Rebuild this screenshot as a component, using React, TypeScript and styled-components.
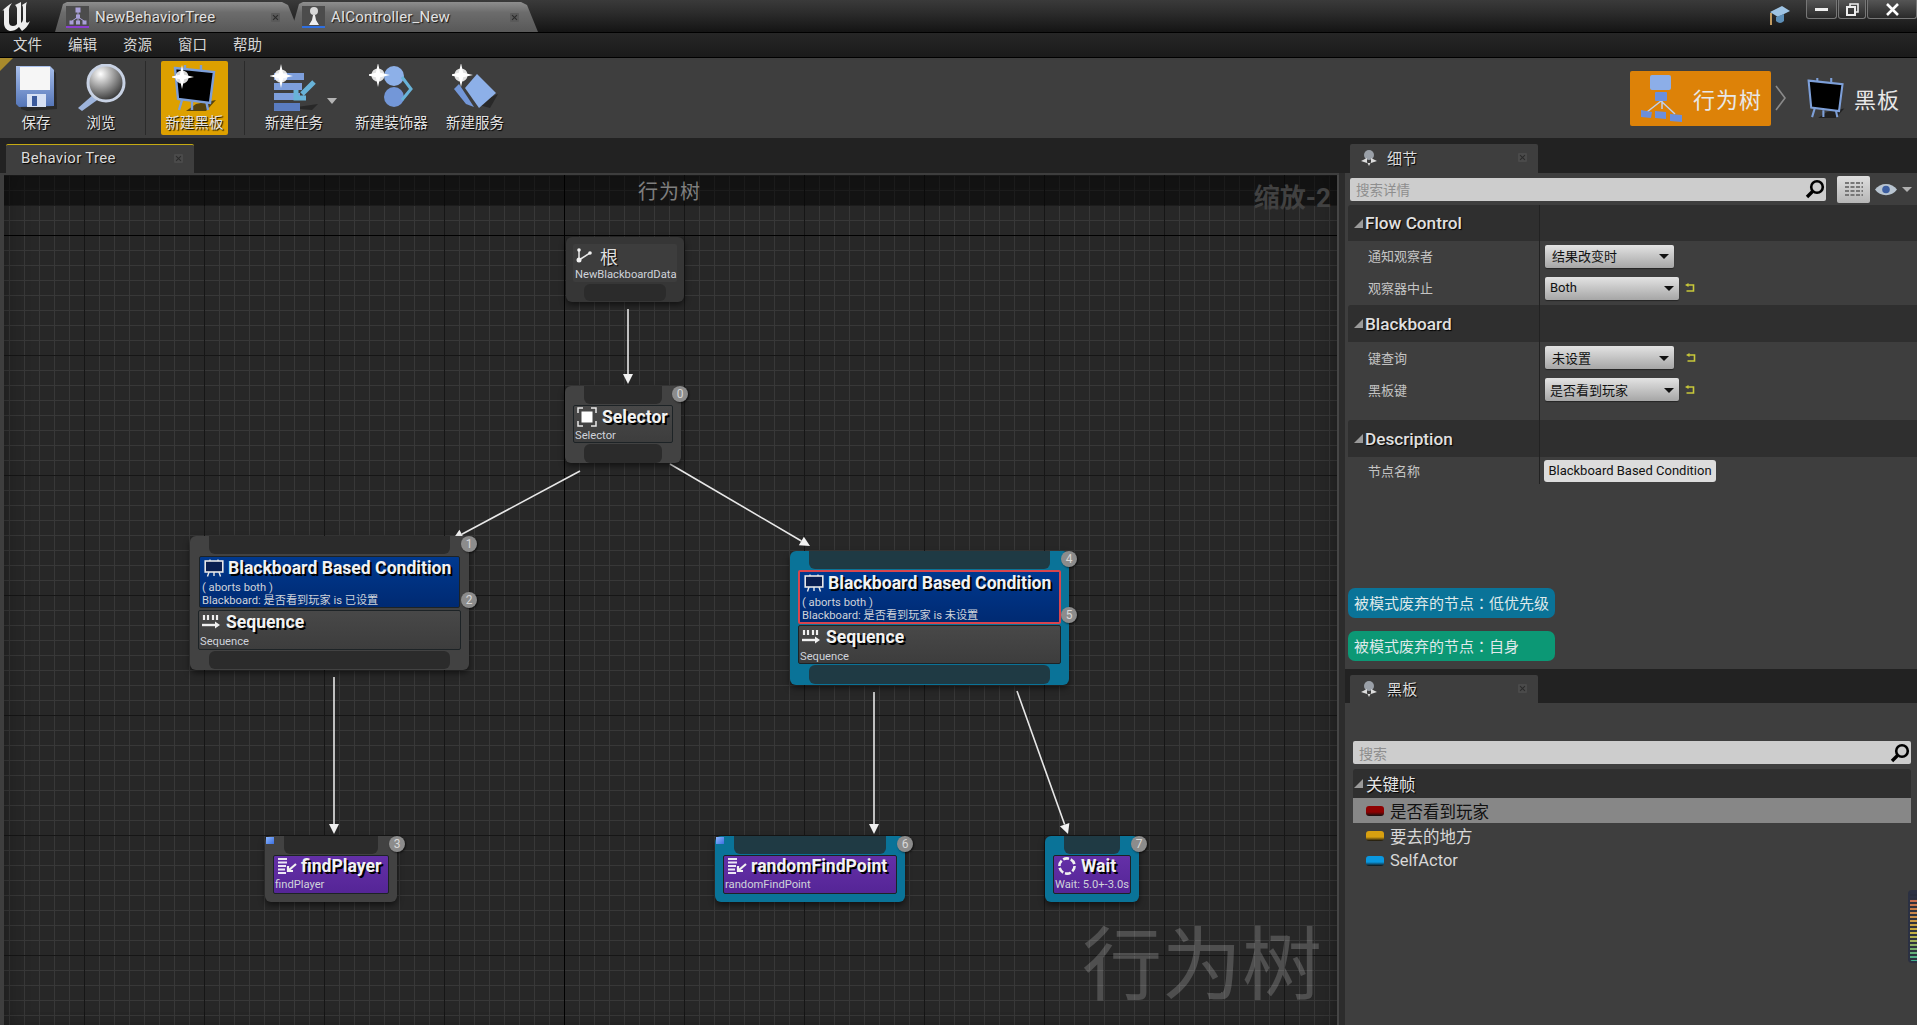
import React from "react";
import styled, { createGlobalStyle } from "styled-components";

const CJK = `"Roboto", "Noto Sans CJK SC", sans-serif`;

const Global = createGlobalStyle`
  html, body { margin: 0; padding: 0; background: #3e3e3e; overflow: hidden; }
  #root { width: 1917px; height: 1025px; }
  * { box-sizing: border-box; }
`;

const Screen = styled.div`
  width: 1917px; height: 1025px; display: flex; flex-direction: column;
  font-family: ${CJK}; color: #ddd; background: #3e3e3e; overflow: hidden; position: relative;
`;

/* ---------- title bar ---------- */
const TitleBar = styled.div`
  height: 33px; flex: none; display: flex; align-items: flex-end; position: relative;
  background: linear-gradient(#3a3a3a, #2c2c2c 40%, #141414);
  border-bottom: 1px solid #000;
`;
const LogoBox = styled.div`
  width: 55px; height: 32px; flex: none; padding: 2px 0 0 1px; display: flex;
`;
const DocTab = styled.div<{ $w: number; $shift?: number }>`
  width: ${p => p.$w}px; height: 30px; flex: none; margin-left: ${p => p.$shift ?? 0}px;
  display: flex; align-items: center; gap: 6px; padding: 0 0 0 11px;
  background: linear-gradient(#8e8e8e, #6c6c6c 35%, #585858);
  clip-path: polygon(0 100%, 8px 2px, 12px 0, calc(100% - 22px) 0, calc(100% - 16px) 3px, calc(100% - 5px) 100%);
  font-size: 15px; color: #e2e2e2; text-shadow: 1px 1px 1px #111; letter-spacing: .2px;
`;
const DocIcon = styled.div<{ $line: string }>`
  width: 23px; height: 22px; flex: none; background: #4c4c4c; border-bottom: 2px solid ${p => p.$line};
  display: flex; align-items: center; justify-content: center;
`;
const DocLabel = styled.span<{ $w: number }>` width: ${p => p.$w}px; flex: none; white-space: nowrap; padding-bottom: 1px; `;
const SmallClose = styled.span<{ $c?: string }>`
  width: 9px; height: 9px; flex: none; position: relative; background: ${p => p.$c ?? "#5a5a5a"}; border-radius: 1px;
  &::before, &::after { content: ""; position: absolute; left: 4px; top: 1px; width: 1px; height: 7px; background: #2b2b2b; }
  &::before { transform: rotate(45deg); } &::after { transform: rotate(-45deg); }
`;
const TitleRight = styled.div`
  margin-left: auto; align-self: flex-start; display: flex; align-items: flex-start;
`;
const CapBox = styled.div` margin: 5px 14px 0 0; width: 22px; height: 21px; `;
const WinBtn = styled.div<{ $w: number }>`
  width: ${p => p.$w}px; height: 19px; margin-left: 1px; display: flex; align-items: center; justify-content: center;
  background: linear-gradient(#555, #2a2a2a); border: 1px solid #777; border-top: none; border-radius: 0 0 3px 3px;
`;

/* ---------- menu ---------- */
const MenuBar = styled.div`
  height: 25px; flex: none; display: flex; align-items: center; padding: 0 0 4px 13px; gap: 26px;
  background: linear-gradient(#262626, #1a1a1a); border-bottom: 1px solid #000;
  font-size: 14.5px; color: #d8d8d8;
`;
const MenuItem = styled.span` width: 29px; white-space: nowrap; `;

/* ---------- toolbar ---------- */
const Toolbar = styled.div`
  height: 80px; flex: none; display: flex; align-items: center; position: relative; padding-left: 4px;
  background: #3e3e3e;
  &::before { content: ""; position: absolute; left: 0; top: 0; border-top: 13px solid #a88a2c; border-right: 13px solid transparent; }
`;
const ToolButton = styled.div<{ $w: number; $on?: boolean; $ml?: number }>`
  width: ${p => p.$w}px; height: 74px; flex: none; display: flex; flex-direction: column; align-items: center;
  padding-top: 3px; border-radius: 2px; background: ${p => (p.$on ? "#dda000" : "transparent")};
  position: relative; margin-left: ${p => p.$ml ?? 0}px;
`;
const ToolIcon = styled.div` height: 48px; flex: none; display: flex; align-items: center; justify-content: center; `;
const ToolLabel = styled.span`
  font-size: 14.5px; line-height: 20px; margin-top: 2px; color: #e4e4e4; white-space: nowrap; text-shadow: 1px 1px 1px #000;
`;
const ToolSep = styled.div<{ $l: number; $r: number }>`
  width: 1px; height: 74px; flex: none; background: #2a2a2a; margin: 0 ${p => p.$r}px 0 ${p => p.$l}px;
`;
const Caret = styled.span`
  position: absolute; right: -12px; top: 37px; border: 5px solid transparent; border-top: 6px solid #b4b4b4; border-bottom: none;
`;
const ModeBar = styled.div` margin-left: auto; display: flex; align-items: center; padding-right: 17px; `;
const ModeButton = styled.div<{ $on?: boolean; $w: number; $pad: number; $gap: number }>`
  width: ${p => p.$w}px; height: 55px; display: flex; align-items: center; gap: ${p => p.$gap}px; padding-left: ${p => p.$pad}px; border-radius: 2px;
  background: ${p => (p.$on ? "#dd8208" : "transparent")}; font-size: 22px; color: #e8e8e8; white-space: nowrap;
  letter-spacing: 1px;
`;
const ModeChevron = styled.svg` margin: 0 19px 0 4px; flex: none; `;

/* ---------- workspace ---------- */
const Workspace = styled.div` flex: 1; min-height: 0; display: flex; `;
const LeftCol = styled.div` width: 1345px; flex: none; display: flex; flex-direction: column; background: #3e3e3e; `;
const RightCol = styled.div` flex: 1; min-width: 0; display: flex; flex-direction: column; background: #3e3e3e; position: relative; `;
const TabRow = styled.div<{ $h: number; $left: number; $mt?: number }>`
  height: ${p => p.$h}px; flex: none; background: #222; display: flex; align-items: flex-end; padding-left: ${p => p.$left}px;
  margin-top: ${p => p.$mt ?? 0}px;
`;
const PanelTab = styled.div<{ $w: number; $h?: number; $accent?: boolean }>`
  width: ${p => p.$w}px; height: ${p => p.$h ?? 29}px; background: #3e3e3e; display: flex; align-items: center; padding: 0 11px 2px 10px;
  font-size: 15px; color: #dcdcdc; text-shadow: 1px 1px 1px #000; position: relative;
  border-top: ${p => (p.$accent ? "1px solid #c5aa12" : "none")}; border-radius: 2px 2px 0 0;
`;
const TabIconBox = styled.span` width: 22px; flex: none; display: flex; `;
const TabText = styled.span<{ $indent?: number }>` flex: 1; padding-left: ${p => p.$indent ?? 0}px; letter-spacing: .3px; `;

const CanvasRow = styled.div` flex: 1; min-height: 0; display: flex; padding-top: 2px; `;
const Gutter = styled.div` width: 6px; flex: none; background: #2c2c2c; margin-top: -2px; `;
const Canvas = styled.div`
  flex: 1; margin-left: 4px; position: relative; overflow: hidden; background-color: #272727;
  border-right: 2px solid #464646;
  box-shadow: inset -14px 0 24px -14px rgba(0,0,0,.35), inset 14px 0 24px -14px rgba(0,0,0,.35);
  background-repeat: no-repeat, no-repeat, repeat, repeat, repeat, repeat;
  background-image:
    linear-gradient(#000, #000),
    linear-gradient(#000, #000),
    linear-gradient(to right, #161616 1px, transparent 1px),
    linear-gradient(to bottom, #161616 1px, transparent 1px),
    linear-gradient(to right, #383838 1px, transparent 1px),
    linear-gradient(to bottom, #383838 1px, transparent 1px);
  background-size: 1px 100%, 100% 1px, 120px 100%, 100% 120px, 15px 100%, 100% 15px;
  background-position: 560px 0, 0 60px, 80px 0, 0 60px, 5px 0, 0 0;
`;
const GraphHeader = styled.div`
  height: 31px; background: rgba(0,0,0,.5); display: flex; align-items: center; justify-content: center; padding: 0 2px 0 0;
  font-size: 20px; color: #7f7f7f; letter-spacing: 1px;
`;
const ZoomText = styled.div`
  position: absolute; right: 6px; top: 2px; font-size: 26px; font-weight: 700; color: #414141;
`;
const Watermark = styled.div`
  position: absolute; right: 15px; bottom: 9px; font-size: 80px; line-height: 100px; color: rgba(255,255,255,.19); font-weight: 400;
`;
const Wires = styled.svg` position: absolute; left: 0; top: 0; width: 100%; height: 100%; `;

/* ---------- nodes ---------- */
const NodeBox = styled.div<{ $x: number; $y: number; $w: number; $h: number; $bg: string }>`
  position: absolute; left: ${p => p.$x - 4}px; top: ${p => p.$y - 175}px; width: ${p => p.$w}px; height: ${p => p.$h}px;
  background: ${p => p.$bg}; border-radius: 6px; box-shadow: 0 3px 6px rgba(0,0,0,.55);
  display: flex; flex-direction: column; padding: 0 8px;
`;
const Pin = styled.div<{ $h: number; $side: number; $bg: string; $gap?: number }>`
  height: ${p => p.$h}px; flex: none; margin: ${p => p.$gap ?? 0}px ${p => p.$side}px 0; background: ${p => p.$bg};
  border-radius: 0 0 6px 6px;
`;
const PinBottom = styled(Pin)` border-radius: 6px 6px 6px 6px; `;
const Card = styled.div<{ $kind: "blue" | "gray" | "purple" | "root"; $sel?: boolean; $h: number; $gap?: number; $m?: number }>`
  height: ${p => p.$h}px; flex: none; margin: ${p => p.$gap ?? 1}px ${p => p.$m ?? 0}px 0; border-radius: 2px; padding: 0 1px;
  border: ${p => (p.$sel ? "2px solid #d8454e" : `1px solid ${p.$kind === "root" ? "transparent" : "#1d2326"}`)};
  background: ${p =>
    p.$kind === "blue" ? "linear-gradient(#00398f, #002a72)" :
    p.$kind === "purple" ? "linear-gradient(#6430a8, #552596)" :
    p.$kind === "root" ? "rgba(255,255,255,.035)" : "linear-gradient(#484848, #3d3d3d)"};
`;
const TitleLine = styled.div<{ $indent: number; $gap: number; $h?: number }>`
  display: flex; align-items: center; gap: ${p => p.$gap}px; padding: 0 0 2px ${p => p.$indent}px; height: ${p => p.$h ?? 24}px;
`;
const NodeTitle = styled.span`
  font-size: 17.6px; font-weight: 700; color: #f2f2f2; white-space: nowrap; text-shadow: 2px 2px 0 #000;
`;
const RootTitle = styled.span` font-size: 18px; color: #dedede; text-shadow: 1px 1px 1px #000; `;
const Sub = styled.div<{ $indent?: number }>`
  font-size: 11.2px; line-height: 13px; color: #cfd3da; padding-left: ${p => p.$indent ?? 0}px; white-space: nowrap;
`;
const Badge = styled.div<{ $x: number; $y: number }>`
  position: absolute; left: ${p => p.$x - 12}px; top: ${p => p.$y - 183}px; width: 16px; height: 16px; border-radius: 50%;
  background: #8c8c8c; color: #d8d8d8; font-size: 12px; line-height: 16px; text-align: center; box-shadow: 1px 1px 2px rgba(0,0,0,.6);
`;
const BlueFlag = styled.div`
  position: absolute; left: 1px; top: 1px; width: 8px; height: 7px; background: linear-gradient(135deg, #8db8ff, #3c6fe0);
`;

/* ---------- details ---------- */
const SearchRow = styled.div` height: 32px; flex: none; display: flex; align-items: center; padding: 0 0 0 5px; `;
const SearchField = styled.div<{ $w: number; $size?: number }>`
  width: ${p => p.$w}px; height: 23px; background: #cdcdcd; border-radius: 2px; display: flex; align-items: center;
  justify-content: space-between; padding: 0 1px 0 6px; font-size: ${p => p.$size ?? 13.5}px; color: #8e8e8e; flex: none;
`;
const GridBtn = styled.div`
  width: 33px; height: 27px; margin-left: 11px; background: linear-gradient(#dedede, #b6b6b6); border-radius: 2px;
  display: flex; align-items: center; justify-content: center; flex: none;
`;
const Eye = styled.div` display: flex; align-items: center; gap: 5px; margin-left: 5px; `;
const TinyCaret = styled.span` border: 5px solid transparent; border-top: 5px solid #b0b0b0; border-bottom: none; `;

const CategoryHead = styled.div<{ $h: number }>`
  height: ${p => p.$h}px; flex: none; margin-left: 3px; background: #2f2f2f; border-radius: 3px 0 0 0;
  display: flex; align-items: center; padding-left: 6px; gap: 2px; position: relative;
  font-size: 17.2px; font-weight: 500; color: #e0e0e0; text-shadow: 1px 1px 1px #000;
  &::after { content: ""; position: absolute; left: 191px; top: 0; bottom: 0; width: 1px; background: #222; }
`;
const Tri = styled.span`
  width: 0; height: 0; border-left: 9px solid transparent; border-bottom: 9px solid #9a9a9a; flex: none;
`;
const Row = styled.div<{ $h: number }>`
  height: ${p => p.$h}px; flex: none; margin-left: 3px; display: grid; grid-template-columns: 191px 1fr; align-items: center;
`;
const RowLabel = styled.div`
  font-size: 13px; color: #c4c4c4; padding: 0 0 1px 20px; height: 100%; display: flex; align-items: center;
`;
const RowValue = styled.div`
  height: 100%; border-left: 1px solid #222; display: flex; align-items: center; padding-left: 5px; gap: 6px;
`;
const Spacer = styled.div<{ $h: number }>` height: ${p => p.$h}px; flex: none; margin-left: 194px; border-left: 1px solid #222; `;
const Combo = styled.div<{ $w: number; $pad: number }>`
  width: ${p => p.$w}px; height: 23px; flex: none; border-radius: 2px; padding: 0 5px 1px ${p => p.$pad}px;
  background: linear-gradient(#e3e3e3, #a6a6a6); display: flex; align-items: center; justify-content: space-between;
  font-size: 13px; color: #111; white-space: nowrap; box-shadow: 0 1px 1px rgba(0,0,0,.4);
`;
const ComboArrow = styled.span` border: 5px solid transparent; border-top: 5px solid #111; border-bottom: none; margin-top: 2px; `;
const ResetGap = styled.span<{ $w: number }>` width: ${p => p.$w}px; flex: none; `;
const TextBtn = styled.div`
  height: 22px; width: 172px; margin-left: -1px; background: #dcdcdc; border-radius: 3px; font-size: 13px; color: #111;
  display: flex; align-items: center; justify-content: center; white-space: nowrap;
`;
const Legend = styled.div<{ $bg: string; $mt: number }>`
  width: 207px; height: 30px; flex: none; margin: ${p => p.$mt}px 0 0 3px; background: ${p => p.$bg}; border-radius: 7px;
  padding: 0 0 2px 6px; display: flex; align-items: center; font-size: 15px; color: #dfe9ea; white-space: nowrap;
  font-family: "Noto Sans CJK TC", "Noto Sans CJK SC", sans-serif;
`;

/* ---------- blackboard ---------- */
const BoardBody = styled.div` flex: 1; display: flex; flex-direction: column; padding: 38px 6px 0 8px; `;
const ListHead = styled.div`
  height: 29px; margin-top: 5px; flex: none; background: #2f2f2f; display: flex; align-items: center; gap: 3px; padding-left: 1px;
  font-size: 16.5px; color: #e4e4e4; text-shadow: 1px 1px 1px #000; border-radius: 3px 3px 0 0;
`;
const KeyRow = styled.div<{ $sel?: boolean }>`
  height: 25px; flex: none; display: flex; align-items: center; padding-left: 13px; gap: 6px;
  background: ${p => (p.$sel ? "#878787" : "transparent")}; color: ${p => (p.$sel ? "#111" : "#d8d8d8")};
  font-size: 16.5px; white-space: nowrap;
`;
const KeyPill = styled.span<{ $c: string }>`
  width: 18px; height: 10px; border-radius: 3px; flex: none;
  background: linear-gradient(${p => p.$c} 60%, #111);
`;
const Meter = styled.div`
  position: absolute; right: -1px; top: 752px; width: 10px; height: 73px; border-radius: 4px 0 0 4px; background:
    repeating-linear-gradient(transparent 0 2px, rgba(40,45,60,.95) 2px 4px),
    linear-gradient(#2b3042 6px, #c86a50 8px, #c8b040 40px, #40b090);
  border: 2px solid #2b3042; border-right: none;
`;

/* ---------- drawings ---------- */
const Star = ({ x, y, r = 13 }: { x: number; y: number; r?: number }) => (
  <g>
    <circle cx={x} cy={y} r={r * 0.55} fill="#fff" opacity=".85" />
    <path
      fill="#fff"
      d={`M${x} ${y - r}L${x + r * 0.18} ${y - r * 0.18}L${x + r} ${y}L${x + r * 0.18} ${y + r * 0.18}L${x} ${y + r}L${x - r * 0.18} ${y + r * 0.18}L${x - r} ${y}L${x - r * 0.18} ${y - r * 0.18}Z`}
    />
  </g>
);

const Logo = () => (
  <svg width="30" height="30" viewBox="0 0 30 30">
    <path
      fill="#eee"
      d="M1 9C4 6 7 3 11 1C8 5 8 7 8 9V20C8 23 10 24 12 24C14 24 15 23 16 22V7C16 5 15 4 14 3L20 0V21C21 20 22 19 22 17V6C22 4 21 3 21 3L26 0C25 2 25 4 25 6V20C26 21 27 21 29 19C27 24 24 27 21 29L18 25C15 28 12 29 9 29C5 28 3 25 3 21V9C3 8 2 8 1 9Z"
    />
  </svg>
);

const TreeSmall = () => (
  <svg width="18" height="18" viewBox="0 0 18 18">
    <g fill="#a9a0d8" stroke="#a9a0d8">
      <rect x="7" y="1" width="4" height="4" /><rect x="7.5" y="8" width="3" height="3" />
      <rect x="1" y="14" width="3" height="3" /><rect x="7.5" y="14" width="3" height="3" /><rect x="14" y="14" width="3" height="3" />
      <path d="M9 5V14M9 10L3 14M9 10L15 14" fill="none" />
    </g>
  </svg>
);
const PawnSmall = () => (
  <svg width="14" height="20" viewBox="0 0 14 20">
    <circle cx="7" cy="5" r="4" fill="#d8d8d8" />
    <path d="M6 9H8L9 14L12 19H2L5 14Z" fill="#eee" />
  </svg>
);
const Cap = () => (
  <svg width="22" height="21" viewBox="0 0 22 21">
    <path d="M1 7L13 1L21 6L9 12Z" fill="#9fc4e4" />
    <path d="M7 12L15 9V16C12 19 9 18 7 16Z" fill="#5d8fb8" />
    <path d="M2 8V20" stroke="#c09a60" strokeWidth="2" />
  </svg>
);
const Floppy = () => (
  <svg width="42" height="46" viewBox="0 0 42 46">
    <defs><linearGradient id="fl" x1="0" y1="0" x2="0" y2="1"><stop offset="0" stopColor="#a9c0ec" /><stop offset="1" stopColor="#5475b8" /></linearGradient></defs>
    <path d="M6 4H36L41 8L42 44L12 46L6 44Z" fill="#111" opacity=".45" />
    <path d="M1 1H35L39 5V41L4 42L1 39Z" fill="url(#fl)" />
    <rect x="5" y="2" width="30" height="23" fill="#f6f6f6" />
    <rect x="12" y="29" width="19" height="13" fill="#d6e0f4" />
    <rect x="17" y="31" width="5" height="10" fill="#3b5a9c" />
  </svg>
);
const Lens = () => (
  <svg width="50" height="48" viewBox="0 0 50 48">
    <defs><radialGradient id="ln" cx=".35" cy=".25" r=".9"><stop offset="0" stopColor="#fff" /><stop offset=".5" stopColor="#888" /><stop offset="1" stopColor="#111" /></radialGradient></defs>
    <path d="M18 30L2 44L6 47L24 34Z" fill="#9db4dc" />
    <circle cx="30" cy="19" r="18" fill="url(#ln)" stroke="#c8d2e4" strokeWidth="3" />
  </svg>
);
const BoardIcon = ({ star }: { star?: boolean }) => (
  <svg width="46" height="48" viewBox="0 0 46 48">
    <path d="M24 40L44 36L34 47L14 47Z" fill="#111" opacity=".65" />
    <path d="M13 6V1M29 6V1M10 36L7 46M34 36L36 46M20 38V46" stroke="#7d9fd8" strokeWidth="2.4" />
    <path d="M3 4L42 8L38 39L6 35Z" fill="#000" stroke="#7d9fd8" strokeWidth="2.4" />
    {star && <Star x={10} y={13} r={12} />}
  </svg>
);
const TaskNew = () => (
  <svg width="48" height="48" viewBox="0 0 48 48">
    <path d="M20 44L48 40L42 46Z" fill="#111" opacity=".5" />
    <g fill="#7e9fdc">
      <rect x="4" y="9" width="30" height="7" /><rect x="4" y="19" width="28" height="7" />
      <rect x="4" y="29" width="26" height="7" /><rect x="4" y="39" width="26" height="8" fill="#5a7cc0" />
    </g>
    <path d="M44 18L32 30M26 26V34H36" stroke="#68b3d8" strokeWidth="5" fill="none" />
    <Star x={11} y={12} r={12} />
  </svg>
);
const DecoNew = () => (
  <svg width="46" height="48" viewBox="0 0 46 48">
    <circle cx="25" cy="12" r="10" fill="#8db0e8" />
    <circle cx="25" cy="33" r="10" fill="#7397d8" />
    <path d="M33 13L42 25L33 36" stroke="#68b3d8" strokeWidth="3" fill="none" />
    <Star x={9} y={11} r={12} />
  </svg>
);
const ServiceNew = () => (
  <svg width="46" height="48" viewBox="0 0 46 48">
    <path d="M24 40L46 30L38 44Z" fill="#111" opacity=".5" />
    <path d="M7 20L22 43L14 40L2 25Z" fill="#7397d8" />
    <path d="M25 10L44 29L27 44L13 24Z" fill="#8db0e8" />
    <Star x={9} y={11} r={12} />
  </svg>
);
const Tree = () => (
  <svg width="44" height="50" viewBox="0 0 44 50">
    <path d="M22 20V36M21 28L7 39M21 28L35 41" stroke="#c2d0ea" strokeWidth="1.5" />
    <rect x="10" y="2" width="21" height="15" rx="2" fill="#8caee8" />
    <rect x="15" y="19" width="12" height="9" rx="1" fill="#6b8fdc" />
    <path d="M1 37L12 39L11 45L1 44Z" fill="#6b8fdc" /><path d="M15 38L26 39L26 46L15 45Z" fill="#6b8fdc" /><path d="M30 41L42 42L42 49L30 48Z" fill="#6b8fdc" />
  </svg>
);
const Mag = ({ c = "#000" }: { c?: string }) => (
  <svg width="20" height="20" viewBox="0 0 20 20">
    <circle cx="12" cy="8" r="5.8" fill="none" stroke={c} strokeWidth="2.6" />
    <path d="M7.5 12.5L2 18" stroke={c} strokeWidth="3.4" />
  </svg>
);
const Reset = () => (
  <svg width="10" height="10" viewBox="0 0 10 10">
    <path d="M3 2H8.5V8H1.5" fill="none" stroke="#c8c83a" strokeWidth="1.6" />
    <path d="M0 2L3.5 0V4Z" fill="#c8c83a" />
  </svg>
);
const Globe = () => (
  <svg width="18" height="19" viewBox="0 0 18 19">
    <circle cx="9" cy="7" r="5" fill="#9aa0a8" />
    <path d="M1 13L7 10V14L9 18L11 14V10L17 13L11 15H7Z" fill="#dcdcdc" />
  </svg>
);
const BbNodeIcon = () => (
  <svg width="20" height="18" viewBox="0 0 20 18">
    <rect x="1.2" y="2" width="17.6" height="11" fill="#0a1f50" stroke="#e8e8e8" strokeWidth="1.6" />
    <path d="M6 0.5V2M14 0.5V2M5 13L3.5 17.5M15 13L16.5 17.5M10 13V17" stroke="#e8e8e8" strokeWidth="1.4" />
  </svg>
);
const SeqIcon = () => (
  <svg width="20" height="16" viewBox="0 0 20 16">
    <path d="M3 1V6M7 1V6M12 1V6M16 1V6" stroke="#f0f0f0" strokeWidth="2.2" />
    <path d="M1 11H15" stroke="#f0f0f0" strokeWidth="2.4" />
    <path d="M14 7.5L19 11L14 14.5Z" fill="#f0f0f0" />
  </svg>
);
const TaskIcon = () => (
  <svg width="20" height="17" viewBox="0 0 20 17">
    <path d="M1 1H10M1 4.5H10M1 8H9M1 11.5H8M1 15H9" stroke="#ece6f6" strokeWidth="1.9" />
    <path d="M19 6L12 12M11 8V13H16" stroke="#f2f2f2" strokeWidth="2.2" fill="none" />
  </svg>
);
const WaitIcon = () => (
  <svg width="20" height="20" viewBox="0 0 20 20">
    <circle cx="10" cy="10" r="7.6" fill="none" stroke="#f0f0f0" strokeWidth="2.6" strokeDasharray="6 1.9" />
  </svg>
);
const SelectorIcon = () => (
  <svg width="20" height="20" viewBox="0 0 20 20">
    <rect x="4.5" y="4.5" width="11" height="11" fill="#fff" />
    <path d="M1 6V1H6M14 1H19V6M19 14V19H14M6 19H1V14" fill="none" stroke="#e8e8e8" strokeWidth="1.5" />
  </svg>
);
const RootIcon = () => (
  <svg width="17" height="15" viewBox="0 0 17 15">
    <path d="M3 12L3 2M3 12L14 5" stroke="#e8e8e8" strokeWidth="1.5" />
    <circle cx="3" cy="12" r="2.5" fill="#f2f2f2" /><circle cx="3" cy="2" r="1.8" fill="#f2f2f2" /><circle cx="14" cy="5" r="1.8" fill="#f2f2f2" />
  </svg>
);

const Arrow = ({ x1, y1, x2, y2 }: { x1: number; y1: number; x2: number; y2: number }) => {
  const a = Math.atan2(y2 - y1, x2 - x1);
  const len = 10, w = 5;
  const bx = x2 - Math.cos(a) * len, by = y2 - Math.sin(a) * len;
  const nx = -Math.sin(a) * w, ny = Math.cos(a) * w;
  return (
    <g>
      <line x1={x1} y1={y1} x2={bx} y2={by} stroke="#e8e8e8" strokeWidth="1.6" />
      <polygon points={`${x2},${y2} ${bx + nx},${by + ny} ${bx - nx},${by - ny}`} fill="#f2f2f2" />
    </g>
  );
};

const GRAY = "#424242", TEAL = "#0a7398", PIN = "#2b2b2b", TPIN = "#1f3a44";

const BbBody = ({ value, sel }: { value: string; sel?: boolean }) => (
  <Card $kind="blue" $sel={sel} $h={sel ? 54 : 52} $m={sel ? 0 : 1} $gap={sel ? 1 : 2}>
    <TitleLine $indent={3} $gap={4}><BbNodeIcon /><NodeTitle>Blackboard Based Condition</NodeTitle></TitleLine>
    <Sub $indent={1}>( aborts both )</Sub>
    <Sub $indent={1}>Blackboard: 是否看到玩家 is {value}</Sub>
  </Card>
);
const SeqBody = ({ h = 40, gap = 2 }: { h?: number; gap?: number }) => (
  <Card $kind="gray" $h={h} $gap={gap}>
    <TitleLine $indent={1} $gap={5}><SeqIcon /><NodeTitle>Sequence</NodeTitle></TitleLine>
    <Sub>Sequence</Sub>
  </Card>
);
const TaskBody = ({ icon, title, sub }: { icon: React.ReactNode; title: string; sub: string }) => (
  <Card $kind="purple" $h={39}>
    <TitleLine $indent={2} $gap={4} $h={22}>{icon}<NodeTitle>{title}</NodeTitle></TitleLine>
    <Sub>{sub}</Sub>
  </Card>
);

export default function App() {
  return (
    <Screen>
      <Global />
      <TitleBar>
        <LogoBox><Logo /></LogoBox>
        <DocTab $w={249}>
          <DocIcon $line="#8a3fd0"><TreeSmall /></DocIcon>
          <DocLabel $w={170}>NewBehaviorTree</DocLabel>
          <SmallClose />
        </DocTab>
        <DocTab $w={252} $shift={-13}>
          <DocIcon $line="#2f6fe0"><PawnSmall /></DocIcon>
          <DocLabel $w={173}>AIController_New</DocLabel>
          <SmallClose />
        </DocTab>
        <TitleRight>
          <CapBox><Cap /></CapBox>
          <WinBtn $w={31}>
            <svg width="13" height="5" viewBox="0 0 13 5"><rect y="1" width="13" height="3" fill="#eee" /></svg>
          </WinBtn>
          <WinBtn $w={28}>
            <svg width="13" height="13" viewBox="0 0 13 13"><path d="M4 3V1H12V9H10" fill="none" stroke="#eee" strokeWidth="1.6" /><rect x="1" y="4" width="8" height="8" fill="none" stroke="#eee" strokeWidth="2" /></svg>
          </WinBtn>
          <WinBtn $w={50}>
            <svg width="13" height="13" viewBox="0 0 13 13"><path d="M1 1L12 12M12 1L1 12" stroke="#fff" strokeWidth="2.6" /></svg>
          </WinBtn>
        </TitleRight>
      </TitleBar>

      <MenuBar>
        {["文件", "编辑", "资源", "窗口", "帮助"].map(m => <MenuItem key={m}>{m}</MenuItem>)}
      </MenuBar>

      <Toolbar>
        <ToolButton $w={64}><ToolIcon><Floppy /></ToolIcon><ToolLabel>保存</ToolLabel></ToolButton>
        <ToolButton $w={66}><ToolIcon><Lens /></ToolIcon><ToolLabel>浏览</ToolLabel></ToolButton>
        <ToolSep $l={11} $r={15} />
        <ToolButton $w={67} $on><ToolIcon><BoardIcon star /></ToolIcon><ToolLabel>新建黑板</ToolLabel></ToolButton>
        <ToolSep $l={16} $r={18} />
        <ToolButton $w={62}><ToolIcon><TaskNew /></ToolIcon><ToolLabel>新建任务</ToolLabel><Caret /></ToolButton>
        <ToolButton $w={75} $ml={29}><ToolIcon><DecoNew /></ToolIcon><ToolLabel>新建装饰器</ToolLabel></ToolButton>
        <ToolButton $w={60} $ml={16}><ToolIcon><ServiceNew /></ToolIcon><ToolLabel>新建服务</ToolLabel></ToolButton>
        <ModeBar>
          <ModeButton $on $w={141} $pad={10} $gap={9}><Tree />行为树</ModeButton>
          <ModeChevron width="12" height="26" viewBox="0 0 12 26"><path d="M1 1L10 13L1 25" fill="none" stroke="#8a8a8a" strokeWidth="1.6" /></ModeChevron>
          <ModeButton $w={94} $pad={0} $gap={8}><BoardIcon />黑板</ModeButton>
        </ModeBar>
      </Toolbar>

      <Workspace>
        <LeftCol>
          <TabRow $h={35} $left={6}>
            <PanelTab $w={188} $accent>
              <TabText $indent={5}>Behavior Tree</TabText><SmallClose $c="#4a4a4a" />
            </PanelTab>
          </TabRow>
          <CanvasRow>
            <Canvas>
              <GraphHeader>行为树</GraphHeader>
              <ZoomText>缩放-2</ZoomText>
              <Watermark>行为树</Watermark>
              <Wires>
                <g transform="translate(-4 -175)">
                  <Arrow x1={628} y1={309} x2={628} y2={384} />
                  <Arrow x1={580} y1={471} x2={453} y2={539} />
                  <Arrow x1={670} y1={464} x2={810} y2={546} />
                  <Arrow x1={334} y1={677} x2={334} y2={834} />
                  <Arrow x1={874} y1={692} x2={874} y2={834} />
                  <Arrow x1={1017} y1={691} x2={1068} y2={834} />
                </g>
              </Wires>

              <NodeBox $x={566} $y={237} $w={118} $h={65} $bg="#363636">
                <Card $kind="root" $h={38} $gap={7} $m={-1}>
                  <TitleLine $indent={1} $gap={7} $h={23}><RootIcon /><RootTitle>根</RootTitle></TitleLine>
                  <Sub>NewBlackboardData</Sub>
                </Card>
                <PinBottom $h={17} $side={10} $bg={PIN} $gap={2} />
              </NodeBox>

              <NodeBox $x={565} $y={386} $w={116} $h={77} $bg={GRAY}>
                <Pin $h={18} $side={11} $bg={PIN} />
                <Card $kind="gray" $h={38} $gap={1}>
                  <TitleLine $indent={2} $gap={5} $h={23}><SelectorIcon /><NodeTitle>Selector</NodeTitle></TitleLine>
                  <Sub>Selector</Sub>
                </Card>
                <PinBottom $h={19} $side={11} $bg={PIN} $gap={1} />
              </NodeBox>
              <Badge $x={680} $y={394}>0</Badge>

              <NodeBox $x={190} $y={536} $w={279} $h={134} $bg={GRAY}>
                <Pin $h={18} $side={11} $bg={PIN} />
                <BbBody value="已设置" />
                <SeqBody />
                <PinBottom $h={18} $side={11} $bg={PIN} $gap={1} />
              </NodeBox>
              <Badge $x={469} $y={544}>1</Badge>
              <Badge $x={469} $y={600}>2</Badge>

              <NodeBox $x={790} $y={551} $w={279} $h={134} $bg={TEAL}>
                <Pin $h={18} $side={11} $bg={TPIN} />
                <BbBody value="未设置" sel />
                <SeqBody h={39} gap={1} />
                <PinBottom $h={19} $side={11} $bg={TPIN} $gap={1} />
              </NodeBox>
              <Badge $x={1069} $y={559}>4</Badge>
              <Badge $x={1069} $y={615}>5</Badge>

              <NodeBox $x={265} $y={836} $w={132} $h={66} $bg={GRAY}>
                <BlueFlag />
                <Pin $h={18} $side={11} $bg={PIN} />
                <TaskBody icon={<TaskIcon />} title="findPlayer" sub="findPlayer" />
              </NodeBox>
              <Badge $x={397} $y={844}>3</Badge>

              <NodeBox $x={715} $y={836} $w={190} $h={66} $bg={TEAL}>
                <BlueFlag />
                <Pin $h={18} $side={11} $bg={TPIN} />
                <TaskBody icon={<TaskIcon />} title="randomFindPoint" sub="randomFindPoint" />
              </NodeBox>
              <Badge $x={905} $y={844}>6</Badge>

              <NodeBox $x={1045} $y={836} $w={94} $h={66} $bg={TEAL}>
                <Pin $h={18} $side={11} $bg={TPIN} />
                <TaskBody icon={<WaitIcon />} title="Wait" sub="Wait: 5.0+-3.0s" />
              </NodeBox>
              <Badge $x={1139} $y={844}>7</Badge>
            </Canvas>
            <Gutter />
          </CanvasRow>
        </LeftCol>

        <RightCol>
          <TabRow $h={35} $left={5}>
            <PanelTab $w={188}>
              <TabIconBox><Globe /></TabIconBox><TabText $indent={5}>细节</TabText><SmallClose $c="#4a4a4a" />
            </PanelTab>
          </TabRow>
          <SearchRow>
            <SearchField $w={476}>搜索详情<Mag /></SearchField>
            <GridBtn>
              <svg width="18" height="17" viewBox="0 0 18 17">
                <path d="M0 2H18M0 6H18M0 10H18M0 14H18" stroke="#777" strokeWidth="2.2" strokeDasharray="4 1.5" />
              </svg>
            </GridBtn>
            <Eye>
              <svg width="22" height="13" viewBox="0 0 22 13">
                <path d="M0 6.5C5 -1 17 -1 22 6.5C17 14 5 14 0 6.5Z" fill="#b8c4d0" /><circle cx="11" cy="6.5" r="3.8" fill="#3d5ea0" />
              </svg>
              <TinyCaret />
            </Eye>
          </SearchRow>

          <CategoryHead $h={36}><Tri />Flow Control</CategoryHead>
          <Row $h={30}><RowLabel>通知观察者</RowLabel><RowValue><Combo $w={129} $pad={7}>结果改变时<ComboArrow /></Combo></RowValue></Row>
          <Row $h={34}><RowLabel>观察器中止</RowLabel><RowValue><Combo $w={134} $pad={5}>Both<ComboArrow /></Combo><Reset /></RowValue></Row>
          <CategoryHead $h={37}><Tri />Blackboard</CategoryHead>
          <Row $h={31}><RowLabel>键查询</RowLabel><RowValue><Combo $w={129} $pad={7}>未设置<ComboArrow /></Combo><ResetGap $w={0} /><Reset /></RowValue></Row>
          <Row $h={33}><RowLabel>黑板键</RowLabel><RowValue><Combo $w={134} $pad={5}>是否看到玩家<ComboArrow /></Combo><Reset /></RowValue></Row>
          <Spacer $h={14} />
          <CategoryHead $h={37}><Tri />Description</CategoryHead>
          <Row $h={27}><RowLabel>节点名称</RowLabel><RowValue><TextBtn>Blackboard Based Condition</TextBtn></RowValue></Row>

          <Legend $bg="#0a7398" $mt={104}>被模式废弃的节点：低优先级</Legend>
          <Legend $bg="#0c9875" $mt={13}>被模式废弃的节点：自身</Legend>

          <TabRow $h={34} $mt={8} $left={5}>
            <PanelTab $w={188} $h={28}>
              <TabIconBox><Globe /></TabIconBox><TabText $indent={5}>黑板</TabText><SmallClose $c="#4a4a4a" />
            </PanelTab>
          </TabRow>
          <BoardBody>
            <SearchField $w={558} $size={14}>搜索<Mag /></SearchField>
            <ListHead><Tri />关键帧</ListHead>
            <KeyRow $sel><KeyPill $c="#8e0000" />是否看到玩家</KeyRow>
            <KeyRow><KeyPill $c="#d8a010" />要去的地方</KeyRow>
            <KeyRow><KeyPill $c="#0a98e0" />SelfActor</KeyRow>
          </BoardBody>
          <Meter />
        </RightCol>
      </Workspace>
    </Screen>
  );
}
